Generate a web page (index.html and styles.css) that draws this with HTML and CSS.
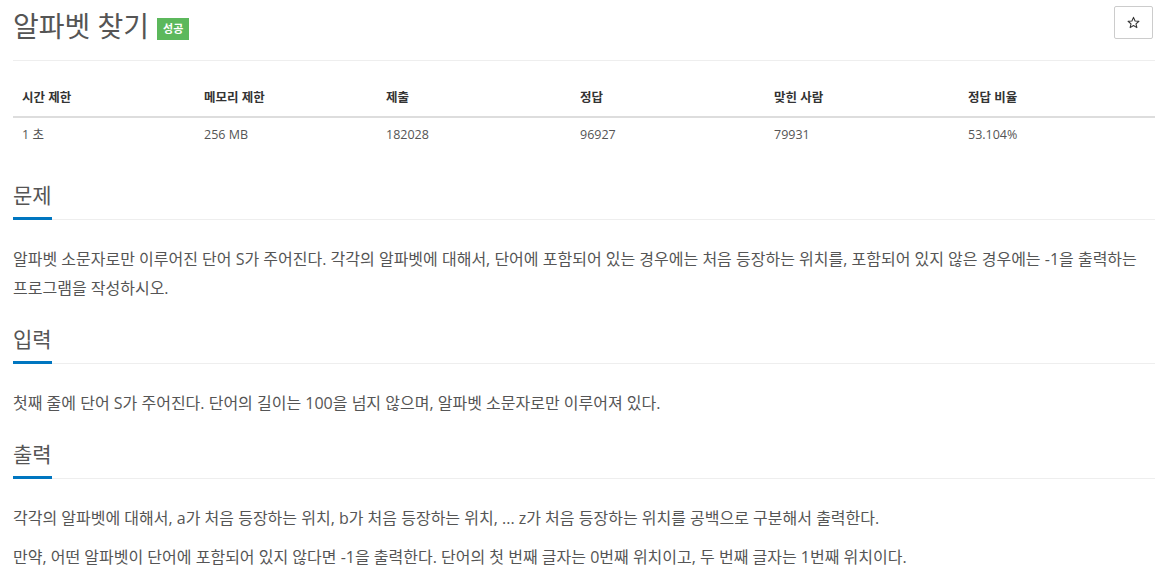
FILE: index.html
```html
<!DOCTYPE html>
<html lang="ko">
<head>
<meta charset="utf-8">
<title>알파벳 찾기</title>
<link rel="stylesheet" href="styles.css">
</head>
<body>
<div class="page">
  <div class="page-header">
    <h1 class="title">알파벳 찾기 <span class="label-success">성공</span></h1>
    <button class="star-btn" type="button" aria-label="즐겨찾기">
      <svg width="13" height="13" viewBox="0 0 24 24"><path d="M12 2.5l2.9 6.6 7.1.6-5.4 4.7 1.6 7-6.2-3.7-6.2 3.7 1.6-7L2 9.7l7.1-.6z" fill="none" stroke="#333" stroke-width="2" stroke-linejoin="round"/></svg>
    </button>
  </div>
  <table class="info">
    <thead>
      <tr><th>시간 제한</th><th>메모리 제한</th><th>제출</th><th>정답</th><th>맞힌 사람</th><th>정답 비율</th></tr>
    </thead>
    <tbody>
      <tr><td>1 초</td><td>256 MB</td><td>182028</td><td>96927</td><td>79931</td><td>53.104%</td></tr>
    </tbody>
  </table>

  <section class="section first">
    <div class="headline"><h2>문제</h2></div>
    <p>알파벳 소문자로만 이루어진 단어 S가 주어진다. 각각의 알파벳에 대해서, 단어에 포함되어 있는 경우에는 처음 등장하는 위치를, 포함되어 있지 않은 경우에는 -1을 출력하는 프로그램을 작성하시오.</p>
  </section>

  <section class="section">
    <div class="headline"><h2>입력</h2></div>
    <p>첫째 줄에 단어 S가 주어진다. 단어의 길이는 100을 넘지 않으며, 알파벳 소문자로만 이루어져 있다.</p>
  </section>

  <section class="section">
    <div class="headline"><h2>출력</h2></div>
    <p>각각의 알파벳에 대해서, a가 처음 등장하는 위치, b가 처음 등장하는 위치, ... z가 처음 등장하는 위치를 공백으로 구분해서 출력한다.</p>
    <p>만약, 어떤 알파벳이 단어에 포함되어 있지 않다면 -1을 출력한다. 단어의 첫 번째 글자는 0번째 위치이고, 두 번째 글자는 1번째 위치이다.</p>
  </section>
</div>
</body>
</html>
```
FILE: styles.css
```css
* { box-sizing: border-box; }
html, body { margin: 0; padding: 0; background: #fff; }
body {
  font-family: "Open Sans", "Noto Sans CJK KR", sans-serif;
  color: #555;
  font-size: 13px;
}
.page { padding: 0 14px 0 13px; }

.page-header {
  display: flex;
  justify-content: space-between;
  align-items: flex-start;
  border-bottom: 1px solid #eee;
  height: 61px;
}
.title {
  margin: 8px 0 0 0;
  font-size: 28px;
  font-weight: 400;
  line-height: 36px;
  color: #555;
  display: flex;
  align-items: center;
}
.label-success {
  display: inline-block;
  margin-left: 8px;
  margin-top: 6px;
  background: #5cb85c;
  color: #fff;
  font-size: 11px;
  font-weight: 700;
  line-height: 22px;
  height: 22px;
  padding: 0 6px;
}
.star-btn {
  margin-top: 6px;
  margin-right: 2px;
  width: 39px;
  height: 33px;
  background: #fff;
  border: 1px solid #ccc;
  border-radius: 2px;
  padding: 0;
  display: flex;
  align-items: center;
  justify-content: center;
}

.info {
  width: 100%;
  border-collapse: collapse;
  margin-top: 20px;
  margin-bottom: 20px;
}
.info th, .info td {
  text-align: left;
  padding: 8px 8px 8px 9px;
  line-height: 18.5px;
  font-size: 12.5px;
}
.info th {
  font-weight: 700;
  color: #333;
  border-bottom: 2px solid #ddd;
}
.info th:nth-child(1), .info th:nth-child(2) { width: 182px; }
.info th:nth-child(3), .info th:nth-child(4), .info th:nth-child(5) { width: 194px; }

.section { margin-top: 25px; }
.section.first { margin-top: 32px; }
.headline {
  border-bottom: 1px solid #eee;
  margin-bottom: 25px;
}
.headline h2 {
  display: inline-block;
  margin: 0 0 -1px 0;
  font-size: 21px;
  font-weight: 400;
  line-height: 23px;
  padding-bottom: 10px;
  border-bottom: 3px solid #0076c0;
  color: #555;
}
.section p {
  margin: 0 0 10px 0;
  font-size: 16px;
  line-height: 29px;
  color: #555;
}
```
